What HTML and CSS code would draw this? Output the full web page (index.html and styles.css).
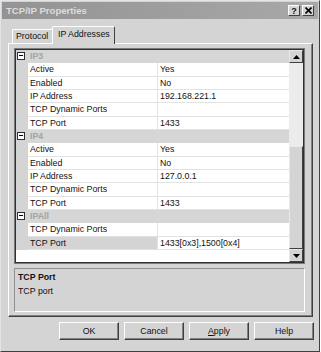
FILE: index.html
```html
<!DOCTYPE html>
<html lang="en">
<head>
    <meta charset="UTF-8">
    <title>TCP/IP Properties</title>
    <link rel="stylesheet" href="styles.css">
</head>
<body>

    <div class="window">
        <div class="titlebar">
            <span class="title">TCP/IP Properties</span>
            <div class="title-buttons">
                <span class="tb-btn">?</span>
                <span class="tb-btn">
                    <svg width="7" height="7" viewBox="0 0 7 7"><path d="M0.5 0.5L6.5 6.5M6.5 0.5L0.5 6.5" stroke="#000" stroke-width="1.6"/></svg>
                </span>
            </div>
        </div>

        <div class="tabs">
            <div class="tab">Protocol</div>
            <div class="tab active">IP Addresses</div>
        </div>

        <div class="panel">
            <div class="grid">
                <div class="grid-inner">
                    <div class="rows">
                        <div class="row cat"><span class="gutter"><span class="expander"></span></span><span class="name">IP3</span><span class="value"></span></div>
                        <div class="row"><span class="gutter"></span><span class="name">Active</span><span class="value">Yes</span></div>
                        <div class="row"><span class="gutter"></span><span class="name">Enabled</span><span class="value">No</span></div>
                        <div class="row"><span class="gutter"></span><span class="name">IP Address</span><span class="value">192.168.221.1</span></div>
                        <div class="row"><span class="gutter"></span><span class="name">TCP Dynamic Ports</span><span class="value"></span></div>
                        <div class="row"><span class="gutter"></span><span class="name">TCP Port</span><span class="value">1433</span></div>

                        <div class="row cat"><span class="gutter"><span class="expander"></span></span><span class="name">IP4</span><span class="value"></span></div>
                        <div class="row"><span class="gutter"></span><span class="name">Active</span><span class="value">Yes</span></div>
                        <div class="row"><span class="gutter"></span><span class="name">Enabled</span><span class="value">No</span></div>
                        <div class="row"><span class="gutter"></span><span class="name">IP Address</span><span class="value">127.0.0.1</span></div>
                        <div class="row"><span class="gutter"></span><span class="name">TCP Dynamic Ports</span><span class="value"></span></div>
                        <div class="row"><span class="gutter"></span><span class="name">TCP Port</span><span class="value">1433</span></div>

                        <div class="row cat"><span class="gutter"><span class="expander"></span></span><span class="name">IPAll</span><span class="value"></span></div>
                        <div class="row"><span class="gutter"></span><span class="name">TCP Dynamic Ports</span><span class="value"></span></div>
                        <div class="row selected"><span class="gutter"></span><span class="name">TCP Port</span><span class="value">1433[0x3],1500[0x4]</span></div>
                    </div>
                    <div class="scrollbar">
                        <div class="sb-btn">
                            <svg width="7" height="4" viewBox="0 0 7 4"><path d="M3.5 0L7 4H0Z" fill="#000"/></svg>
                        </div>
                        <div class="sb-track"></div>
                        <div class="sb-thumb"></div>
                        <div class="sb-btn">
                            <svg width="7" height="4" viewBox="0 0 7 4"><path d="M0 0H7L3.5 4Z" fill="#000"/></svg>
                        </div>
                    </div>
                </div>
            </div>

            <div class="desc">
                <b>TCP Port</b>
                <span>TCP port</span>
            </div>
        </div>

        <div class="buttons">
            <button class="btn">OK</button>
            <button class="btn">Cancel</button>
            <button class="btn"><u>A</u>pply</button>
            <button class="btn">Help</button>
        </div>
    </div>

</body>
</html>
```

FILE: styles.css
```css
body {
    margin: 0;
    background: #fff;
    font-family: "Liberation Sans", Arial, sans-serif;
    font-size: 8.8px;
    color: #111;
}
.window {
    box-sizing: border-box;
    width: 320px;
    height: 352px;
    padding: 1px;
    background: #d4d4d4;
    border: 1px solid;
    border-color: #e4e4e4 #404040 #404040 #e4e4e4;
    display: flex;
    flex-direction: column;
}

/* title bar */
.titlebar {
    height: 17px;
    display: flex;
    align-items: center;
    justify-content: space-between;
    padding: 0 4px 0 4px;
    background: linear-gradient(to right, #939393, #a8a8a8);
}
.title {
    font-weight: bold;
    font-size: 9.6px;
    color: #dcdcdc;
}
.title-buttons {
    display: flex;
    gap: 2px;
}
.tb-btn {
    box-sizing: border-box;
    width: 12px;
    height: 11px;
    background: #d4d4d4;
    border: 1px solid;
    border-color: #fff #404040 #404040 #fff;
    display: flex;
    align-items: center;
    justify-content: center;
    font-weight: bold;
    font-size: 9px;
}

/* tabs */
.tabs {
    display: flex;
    align-items: flex-end;
    height: 17px;
    margin-top: 7px;
    padding-left: 10px;
}
.tab {
    box-sizing: border-box;
    width: 42px;
    height: 14px;
    padding-left: 3px;
    border: 1px solid;
    border-bottom: none;
    border-color: #fff #808080 #808080 #fff;
    border-radius: 2px 2px 0 0;
    line-height: 13px;
    white-space: nowrap;
}
.tab.active {
    width: 63px;
    height: 18px;
    padding-left: 5px;
    margin-left: -2px;
    margin-bottom: -1px;
    background: #d4d4d4;
    position: relative;
    z-index: 1;
    line-height: 15px;
    border-right-color: #404040;
}

/* tab panel */
.panel {
    box-sizing: border-box;
    height: 274px;
    margin: 0 5px 0 6px;
    padding: 4px 7px 4px 5px;
    border: 1px solid;
    border-color: #fff #404040 #404040 #fff;
    box-shadow: inset -1px -1px #808080;
}

/* property grid */
.grid {
    border: 1px solid #7a7a7a;
}
.grid-inner {
    height: 212px;
    display: flex;
    background: #fff;
    border: 1px solid #303030;
}
.rows {
    flex: 1;
    display: flex;
    flex-direction: column;
}
.row {
    display: flex;
    height: 13.33px;
    line-height: 12px;
}
.gutter {
    width: 12px;
    background: #d4d4d4;
    position: relative;
}
.expander {
    position: absolute;
    left: 1px;
    top: 2px;
    box-sizing: border-box;
    width: 8px;
    height: 8px;
    border: 1px solid #303030;
    background: #fff;
}
.expander::after {
    content: "";
    position: absolute;
    left: 1px;
    top: 2px;
    width: 4px;
    height: 1px;
    background: #000;
}
.name {
    box-sizing: border-box;
    width: 130px;
    padding-left: 2px;
    border-bottom: 1px solid #e2e2e2;
    border-right: 1px solid #e2e2e2;
    white-space: nowrap;
}
.value {
    flex: 1;
    padding-left: 2px;
    border-bottom: 1px solid #e2e2e2;
    white-space: nowrap;
}
.cat .name,
.cat .value {
    background: #d6d6d6;
    border-color: #d6d6d6;
}
.cat .name {
    font-weight: bold;
    color: #a4a4a4;
}
.selected .name {
    background: #d4d4d4;
}

/* scrollbar */
.scrollbar {
    width: 14px;
    display: flex;
    flex-direction: column;
}
.sb-btn {
    box-sizing: border-box;
    height: 13px;
    background: #d4d4d4;
    border: 1px solid;
    border-color: #e8e8e8 #404040 #404040 #e8e8e8;
    display: flex;
    align-items: center;
    justify-content: center;
}
.sb-track {
    height: 83px;
    background: #ececec;
}
.sb-thumb {
    box-sizing: border-box;
    flex: 1;
    background: #d4d4d4;
    border: 1px solid;
    border-color: #e8e8e8 #404040 #404040 #e8e8e8;
}

/* description */
.desc {
    box-sizing: border-box;
    height: 44px;
    margin-top: 4px;
    padding: 1px 3px;
    border: 1px solid;
    border-color: #909090 #fff #fff #909090;
    display: flex;
    flex-direction: column;
    line-height: 14px;
}

/* dialog buttons */
.buttons {
    display: flex;
    justify-content: flex-end;
    gap: 5px;
    margin-top: 5px;
    padding-right: 4px;
}
.btn {
    box-sizing: border-box;
    width: 60px;
    height: 18px;
    padding: 0;
    font-family: inherit;
    font-size: 8.8px;
    color: #111;
    background: #d4d4d4;
    border: 1px solid;
    border-color: #fff #404040 #404040 #fff;
    box-shadow: inset -1px -1px #808080;
}
```
